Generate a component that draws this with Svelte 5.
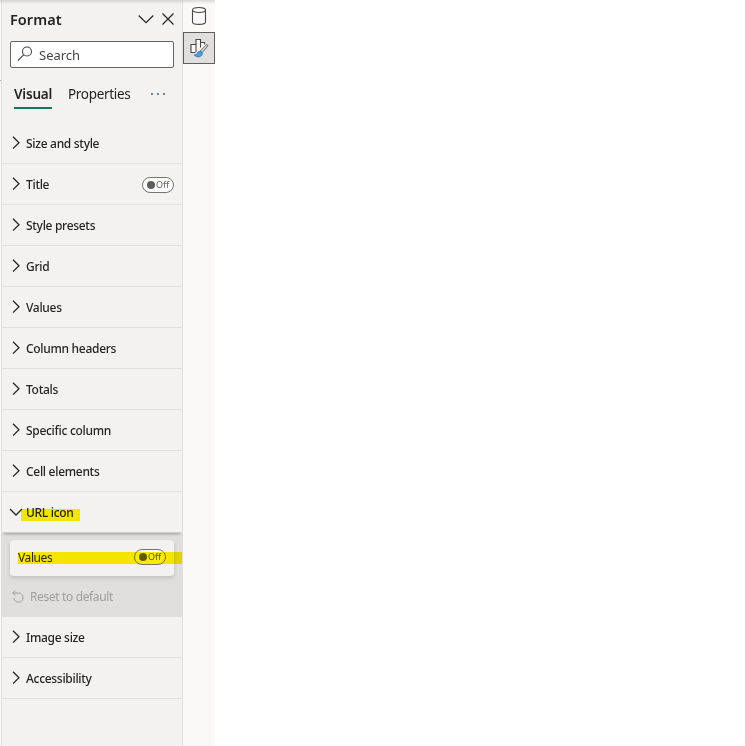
<script>
  const before = [
    { label: 'Size and style' },
    { label: 'Title', toggle: true },
    { label: 'Style presets' },
    { label: 'Grid' },
    { label: 'Values' },
    { label: 'Column headers' },
    { label: 'Totals' },
    { label: 'Specific column' },
    { label: 'Cell elements' }
  ];
  const after = [{ label: 'Image size' }, { label: 'Accessibility' }];
</script>

{#snippet toggle()}
  <span class="toggle"><i></i><span>Off</span></span>
{/snippet}

{#snippet row(item)}
  <div class="row">
    <svg class="chev" width="12" height="14" viewBox="0 0 12 14"><path d="M3 .8l6 5.900-6 5.900" /></svg>
    <span class="label">{item.label}</span>
    {#if item.toggle}{@render toggle()}{/if}
  </div>
{/snippet}

<div class="page">
  <div class="edge"><i></i></div>
  <aside class="panel">
    <header>
      <h1>Format</h1>
      <svg width="18" height="14" viewBox="0 0 18 14"><path d="M1.700 3.500L9 10.700l7.300-7.200" /></svg>
      <svg class="close" width="14" height="14" viewBox="0 0 14 14"><path d="M1.500 1.500l11 11M12.500 1.500l-11 11" /></svg>
    </header>
    <div class="search">
      <svg width="16" height="16" viewBox="0 0 16 16"><circle cx="10" cy="5.500" r="4.500" /><path d="M6.800 8.700L1 14.500" /></svg>
      <span>Search</span>
    </div>
    <nav>
      <span class="tab active">Visual</span>
      <span class="tab">Properties</span>
      <span class="dots"><i></i><i></i><i></i></span>
    </nav>
    {#each before as item}{@render row(item)}{/each}
    <div class="row open">
      <svg class="chev" width="14" height="12" viewBox="0 0 14 12"><path d="M1 3l6 6 6-6" /></svg>
      <span class="label">URL icon</span>
      <i class="mark"></i>
    </div>
    <div class="expanded">
      <div class="card">
        <span class="name">Values</span>
        {@render toggle()}
        <i class="mark"></i>
      </div>
      <div class="reset">
        <svg width="12" height="13" viewBox="0 0 12 13"><path d="M3.500.5L.8 3l2.700 2.500M.8 3h5.700a4.600 4.600 0 1 1-4.600 5" /></svg>
        <span>Reset to default</span>
      </div>
    </div>
    {#each after as item}{@render row(item)}{/each}
  </aside>
  <div class="rail">
    <div class="tool">
      <svg width="16" height="20" viewBox="0 0 16 20"><path class="fill" d="M1.500 4v12c0 1.400 2.800 2.400 6.500 2.400s6.500-1 6.500-2.400V4" /><ellipse class="fill" cx="8" cy="4" rx="6.500" ry="2.500" /></svg>
    </div>
    <div class="tool selected">
      <svg width="20" height="20" viewBox="0 0 20 20">
        <path class="bars" d="M2 6.500h5v-5h4.500v3h4v4L10 15H2z" />
        <path d="M6.500 14.500H2v-8h4.500M7 14v-12.500h4.500v8M11.500 4.500h4v2" />
        <path class="handle" d="M18.500 6.800c-.8-.4-1.500.2-2 .8l-5.200 5.500 1.700 1.600 5-5.700c.5-.6 1.100-1.500.5-2.200z" />
        <path class="brush" d="M12.800 14.200c-1.500-1.600-4-.8-4.500 1.100-.3 1-1.200 1.700-3 1.700 2.700 2.900 8.100 2.200 8-1.900 0-.3-.2-.6-.5-.9z" />
      </svg>
    </div>
  </div>
  <div class="topshade"></div>
</div>

<style>
  .page {
    position: relative;
    display: flex;
    width: 745px;
    height: 746px;
    overflow: hidden;
    background: #fff;
    color: #252423;
    font-family: "Noto Sans", "Open Sans", sans-serif;
    font-size: 12px;
  }
  .topshade {
    position: absolute;
    top: 0;
    left: 0;
    width: 215px;
    height: 4px;
    background: linear-gradient(rgba(0, 0, 0, 0.13), rgba(0, 0, 0, 0));
  }
  .edge { width: 1px; background: #faf9f8; padding-top: 80px; box-sizing: border-box; }
  .edge i { display: block; height: 1px; background: #aaa; }
  .panel {
    box-sizing: border-box;
    width: 182px;
    background: #f3f2f1;
    border-left: 1px solid #e0dfdd;
    border-right: 1px solid #e0dfdd;
  }
  svg { display: block; flex: none; fill: none; stroke: #252423; stroke-width: 1.2; }
  header { display: flex; align-items: center; height: 38px; padding: 0 7px 0 8px; margin-bottom: 3px; }
  h1 { margin: 0 auto 0 0; font-size: 14.500px; font-weight: 600; line-height: 20px; letter-spacing: 0.05px; }
  .close { margin-left: 6px; }
  .search {
    box-sizing: border-box;
    display: flex;
    align-items: center;
    width: 164px;
    height: 27px;
    margin-left: 8px;
    padding-left: 6px;
    border: 1px solid #666462;
    border-radius: 2px;
    background: #fff;
    color: #484644;
    font-size: 13px;
  }
  .search span { margin-left: 6px; }
  .search svg { stroke: #484644; stroke-width: 1.1; margin-top: -1px; }
  nav { display: flex; height: 41px; padding: 15px 0 0 12px; box-sizing: border-box; margin-bottom: 14px; font-size: 13.500px; }
  .tab { height: 26px; line-height: 22px; margin-right: 16px; box-sizing: border-box; letter-spacing: -0.32px; white-space: nowrap; }
  .active { width: 38px; font-weight: 600; letter-spacing: -0.2px; border-bottom: 2px solid #117865; }
  .dots { display: flex; gap: 4px; padding: 10px 0 0 5px; }
  .dots i { width: 2px; height: 2px; background: #3b6478; border-radius: 1px; }
  .row {
    position: relative;
    box-sizing: border-box;
    display: flex;
    align-items: center;
    height: 41px;
    padding: 0 8px;
    border-bottom: 1px solid #e0dfdd;
  }
  .chev { width: 12px; margin-right: 4px; stroke-width: 1.25; }
  .label { padding-top: 2px; font-weight: 500; line-height: 16px; letter-spacing: -0.3px; white-space: nowrap; }
  .toggle {
    box-sizing: border-box;
    display: flex;
    align-items: center;
    width: 32px;
    height: 16px;
    margin-left: auto;
    padding-left: 4px;
    border: 1px solid #777573;
    border-radius: 8px;
    background: #fff;
    color: #605e5c;
    font-size: 9px;
    line-height: 14px;
  }
  .row .toggle { margin-top: 2px; }
  .toggle i { width: 8px; height: 8px; margin-right: 1px; border-radius: 50%; background: #605e5c; }
  .open .chev { width: 14px; margin: 0 3px 0 -1px; }
  .open { z-index: 1; background: #f3f2f1; box-shadow: 0 3px 3px -2px rgba(0, 0, 0, 0.3); border-color: #d2d0ce; }
  .mark { position: absolute; background: #fff200; mix-blend-mode: multiply; }
  .open .mark { left: 19px; top: 17px; width: 59px; height: 12px; }
  .expanded { box-sizing: border-box; height: 84px; padding: 7px 8px 0; background: #e0dfdd; }
  .card {
    position: relative;
    box-sizing: border-box;
    display: flex;
    align-items: center;
    height: 36px;
    padding: 0 8px;
    border-radius: 4px;
    background: #f3f2f1;
    box-shadow: 0 2px 4px rgba(0, 0, 0, 0.14);
  }
  .name { margin-top: -2px; letter-spacing: -0.4px; }
  .card .toggle { background: #f8f7f6; margin-top: -2px; }
  .card .mark { left: 8px; top: 12px; width: 164px; height: 12px; }
  .reset { display: flex; align-items: center; height: 41px; padding-left: 2px; color: #a19f9d; letter-spacing: -0.36px; }
  .reset svg { margin-right: 6px; stroke: #a19f9d; stroke-width: 1; }
  .rail { box-sizing: border-box; width: 32px; background: #faf9f8; }
  .tool { box-sizing: border-box; display: flex; align-items: center; justify-content: center; width: 32px; height: 32px; }
  .tool svg { stroke: #484644; stroke-width: 1.1; }
  .selected { border: 1px solid #605e5c; background: #e0dfdd; }
  .fill, .bars { fill: #fafafa; }
  .bars { stroke: none; }
  .handle { fill: #ddd; stroke-width: 0.8; }
  .brush { fill: #4e9fe0; stroke: #1267b0; stroke-width: 0.8; }
</style>
